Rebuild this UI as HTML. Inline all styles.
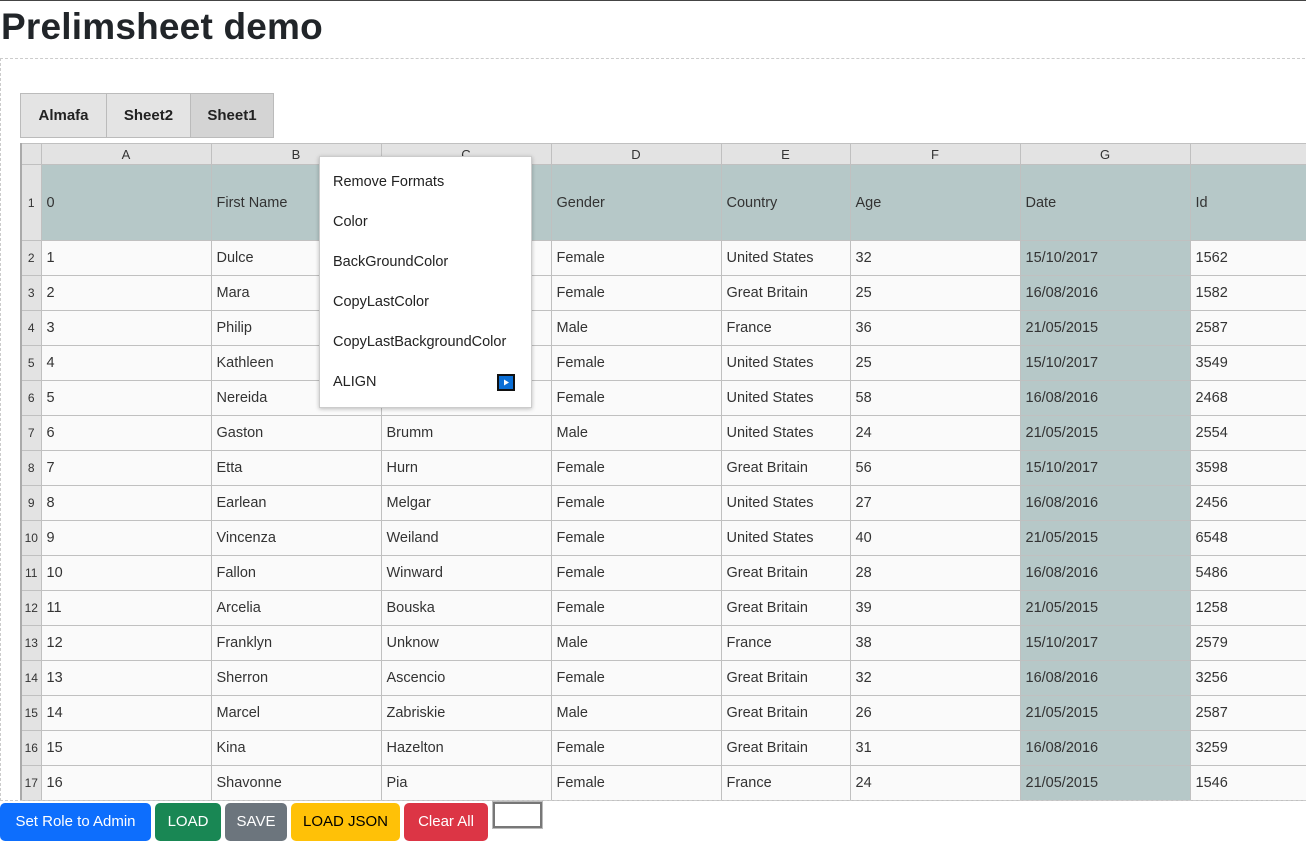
<!DOCTYPE html>
<html><head><meta charset="utf-8"><style>
*{box-sizing:border-box;margin:0;padding:0}
body{width:1306px;height:857px;overflow:hidden;background:#fff;font-family:"Liberation Sans",sans-serif;color:#222;position:relative;border-top:1px solid #444}
h1{position:absolute;left:1px;top:5px;font-size:37px;font-weight:bold;color:#212529;letter-spacing:0.2px}
.box{position:absolute;left:0;top:57px;width:1310px;height:743px;border:1px dashed #ccc;overflow:hidden}
.tabs{position:absolute;left:20px;top:92px;display:flex}
.tab{height:45px;border:1px solid #bbb;background:#e4e4e4;font-weight:bold;font-size:15px;line-height:44px;text-align:center;margin-right:-1px}
table{position:absolute;left:20px;top:142px;border-collapse:collapse;table-layout:fixed;width:1290px;font-size:14.5px;color:#333}
td{border:1px solid #c0c0c0;height:35px;padding:0 0 0 5px;background:#fafafa;white-space:nowrap;overflow:hidden}
tr.h td{height:21px;background:#e3e3e3;text-align:center;font-size:13px;padding:0;color:#333}
tr.r1 td{height:76px;background:#b6c8c8}
td.rh{background:#e3e3e3 !important;font-size:12px;padding:0;text-align:center;border-left:2px solid #aaa;border-right:none}
td.g{background:#b6c8c8}
.menu{position:absolute;left:319px;top:155px;width:213px;height:252px;background:#fff;border:1px solid #ccc;box-shadow:0 1px 4px rgba(0,0,0,.25);font-size:14.5px;color:#222}
.menu div{position:absolute;left:13px}
.btn{position:absolute;top:802px;height:38px;border-radius:5px;font-size:15px;line-height:38px;text-align:center;color:#fff}
</style></head><body>
<h1>Prelimsheet demo</h1>
<div class="box"></div>
<div class="tabs">
<div class="tab" style="width:87px">Almafa</div>
<div class="tab" style="width:85px">Sheet2</div>
<div class="tab" style="width:84px;background:#d4d4d4">Sheet1</div>
</div>
<table>
<colgroup><col style="width:20px"><col style="width:170px"><col style="width:170px"><col style="width:170px"><col style="width:170px"><col style="width:129px"><col style="width:170px"><col style="width:170px"><col style="width:121px"></colgroup>
<tr class="h"><td class="rh"></td><td>A</td><td>B</td><td>C</td><td>D</td><td>E</td><td>F</td><td>G</td><td></td></tr>
<tr class="r1"><td class="rh">1</td><td>0</td><td>First Name</td><td>Last Name</td><td>Gender</td><td>Country</td><td>Age</td><td>Date</td><td>Id</td></tr>
<tr><td class="rh">2</td><td>1</td><td>Dulce</td><td>Abril</td><td>Female</td><td>United States</td><td>32</td><td class="g">15/10/2017</td><td>1562</td></tr>
<tr><td class="rh">3</td><td>2</td><td>Mara</td><td>Hashimoto</td><td>Female</td><td>Great Britain</td><td>25</td><td class="g">16/08/2016</td><td>1582</td></tr>
<tr><td class="rh">4</td><td>3</td><td>Philip</td><td>Gent</td><td>Male</td><td>France</td><td>36</td><td class="g">21/05/2015</td><td>2587</td></tr>
<tr><td class="rh">5</td><td>4</td><td>Kathleen</td><td>Hanner</td><td>Female</td><td>United States</td><td>25</td><td class="g">15/10/2017</td><td>3549</td></tr>
<tr><td class="rh">6</td><td>5</td><td>Nereida</td><td>Magwood</td><td>Female</td><td>United States</td><td>58</td><td class="g">16/08/2016</td><td>2468</td></tr>
<tr><td class="rh">7</td><td>6</td><td>Gaston</td><td>Brumm</td><td>Male</td><td>United States</td><td>24</td><td class="g">21/05/2015</td><td>2554</td></tr>
<tr><td class="rh">8</td><td>7</td><td>Etta</td><td>Hurn</td><td>Female</td><td>Great Britain</td><td>56</td><td class="g">15/10/2017</td><td>3598</td></tr>
<tr><td class="rh">9</td><td>8</td><td>Earlean</td><td>Melgar</td><td>Female</td><td>United States</td><td>27</td><td class="g">16/08/2016</td><td>2456</td></tr>
<tr><td class="rh">10</td><td>9</td><td>Vincenza</td><td>Weiland</td><td>Female</td><td>United States</td><td>40</td><td class="g">21/05/2015</td><td>6548</td></tr>
<tr><td class="rh">11</td><td>10</td><td>Fallon</td><td>Winward</td><td>Female</td><td>Great Britain</td><td>28</td><td class="g">16/08/2016</td><td>5486</td></tr>
<tr><td class="rh">12</td><td>11</td><td>Arcelia</td><td>Bouska</td><td>Female</td><td>Great Britain</td><td>39</td><td class="g">21/05/2015</td><td>1258</td></tr>
<tr><td class="rh">13</td><td>12</td><td>Franklyn</td><td>Unknow</td><td>Male</td><td>France</td><td>38</td><td class="g">15/10/2017</td><td>2579</td></tr>
<tr><td class="rh">14</td><td>13</td><td>Sherron</td><td>Ascencio</td><td>Female</td><td>Great Britain</td><td>32</td><td class="g">16/08/2016</td><td>3256</td></tr>
<tr><td class="rh">15</td><td>14</td><td>Marcel</td><td>Zabriskie</td><td>Male</td><td>Great Britain</td><td>26</td><td class="g">21/05/2015</td><td>2587</td></tr>
<tr><td class="rh">16</td><td>15</td><td>Kina</td><td>Hazelton</td><td>Female</td><td>Great Britain</td><td>31</td><td class="g">16/08/2016</td><td>3259</td></tr>
<tr><td class="rh">17</td><td>16</td><td>Shavonne</td><td>Pia</td><td>Female</td><td>France</td><td>24</td><td class="g">21/05/2015</td><td>1546</td></tr>
</table>
<div style="position:absolute;left:0;top:800px;width:1306px;height:57px;background:#fff"></div>
<div style="position:absolute;left:0;top:799px;width:1306px;border-top:1px dashed #ccc"></div>
<div class="menu">
<div style="top:17px">Remove Formats</div>
<div style="top:57px">Color</div>
<div style="top:97px">BackGroundColor</div>
<div style="top:137px">CopyLastColor</div>
<div style="top:177px">CopyLastBackgroundColor</div>
<div style="top:217px">ALIGN</div>
<span style="position:absolute;left:177px;top:217px;width:18px;height:17px;background:#0b6fd6;border:2px solid #111"><svg width="14" height="13" viewBox="0 0 14 13" style="position:absolute;left:0;top:0"><path d="M5 3.5 L10 6.5 L5 9.5Z" fill="#fff"/></svg></span>
</div>
<div class="btn" style="left:0;width:151px;background:#0d6efd">Set Role to Admin</div>
<div class="btn" style="left:155px;width:66px;background:#198754">LOAD</div>
<div class="btn" style="left:225px;width:62px;background:#6c757d">SAVE</div>
<div class="btn" style="left:291px;width:109px;background:#ffc107;color:#000">LOAD JSON</div>
<div class="btn" style="left:404px;width:84px;background:#dc3545">Clear All</div>
<div style="position:absolute;left:493px;top:801px;width:49px;height:26px;border:2px solid #777;outline:1px solid #bbb;background:#fff"></div>
</body></html>
